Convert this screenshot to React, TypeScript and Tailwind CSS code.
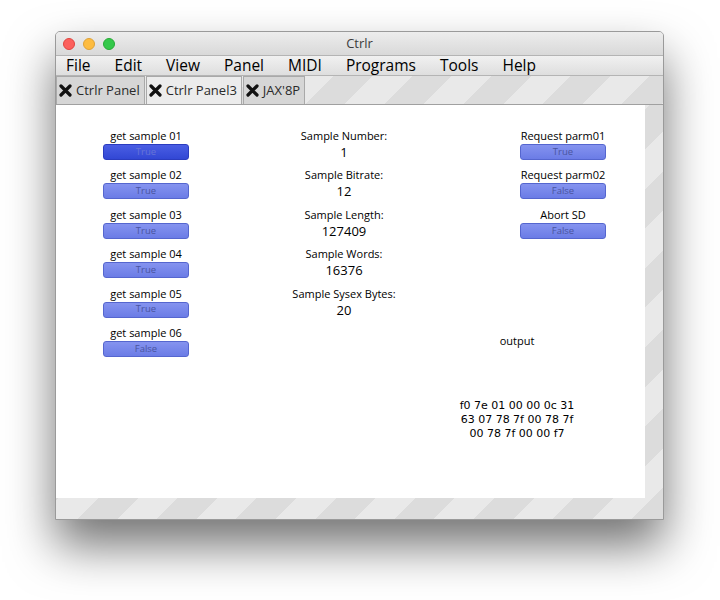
import React from "react";

const stripes =
  "bg-[repeating-linear-gradient(135deg,#e9e9e9_0px,#e9e9e9_28px,#dcdcdc_28px,#dcdcdc_56px)]";

function CloseGlyph() {
  return (
    <svg width="13" height="13" viewBox="0 0 13 13" className="shrink-0">
      <path d="M2 2 L11 11 M11 2 L2 11" stroke="#111" strokeWidth="3.2" strokeLinecap="round" />
    </svg>
  );
}

function Tab({ label, active }: { label: string; active?: boolean }) {
  return (
    <div
      className={
        "flex h-[28px] items-center gap-[4px] border border-b-0 border-[#a9a9a9] px-[2px] text-[13px] text-[#2a2a2a] " +
        (active ? "bg-[#ececec]" : "bg-[#d6d6d6]")
      }
    >
      <CloseGlyph />
      <span className="pr-[2px]">{label}</span>
    </div>
  );
}

function Toggle({ label, value, dark }: { label: string; value: string; dark?: boolean }) {
  return (
    <div className="flex h-[39.4px] flex-col items-center">
      <div className="h-[14px] text-[11px] leading-[14px] text-black whitespace-nowrap">{label}</div>
      <div
        className={
          "mt-[1px] flex h-[16px] w-[86px] items-center justify-center rounded-[3px] border text-[9.5px] " +
          (dark
            ? "border-[#2b3cbf] bg-gradient-to-b from-[#4a5ee4] to-[#3247d4] text-[#6674d6]"
            : "border-[#5566cf] bg-gradient-to-b from-[#8593ef] to-[#6b7ce6] text-[#4a55a0]")
        }
      >
        {value}
      </div>
    </div>
  );
}

function Readout({ label, value }: { label: string; value: string }) {
  return (
    <div className="flex h-[39.4px] flex-col items-center">
      <div className="h-[14px] text-[11px] leading-[14px] text-black whitespace-nowrap">{label}</div>
      <div className="mt-[1px] h-[16px] text-[13px] leading-[16px] text-black">{value}</div>
    </div>
  );
}

const samples = ["True", "True", "True", "True", "True", "False"];

export default function App() {
  return (
    <div
      className="h-[600px] w-[720px] bg-white pl-[55px] pt-[31px]"
      style={{ fontFamily: '"Open Sans", "DejaVu Sans", sans-serif' }}
    >
      <div className="flex h-[489px] w-[609px] flex-col overflow-hidden rounded-t-[5px] border border-[#9a9a9a] bg-[#e0e0e0] shadow-[0_26px_48px_rgba(0,0,0,0.55)]">
        {/* title bar */}
        <div className="grid h-[23px] grid-cols-[1fr_auto_1fr] items-center bg-gradient-to-b from-[#ededed] to-[#d9d9d9] px-[7px]">
          <div className="flex gap-[8px]">
            <span className="h-[12px] w-[12px] rounded-full border border-[#e0443e] bg-[#fc605c]" />
            <span className="h-[12px] w-[12px] rounded-full border border-[#dea236] bg-[#fdbc40]" />
            <span className="h-[12px] w-[12px] rounded-full border border-[#27aa35] bg-[#34c84a]" />
          </div>
          <div className="text-[13px] text-[#3c3c3c]">Ctrlr</div>
          <div />
        </div>

        {/* menu bar */}
        <div className="flex h-[21px] items-center gap-[24px] border-y border-[#b4b4b4] bg-gradient-to-b from-[#f1f1f1] to-[#dedede] pl-[10px] text-[15.5px] text-black">
          {["File", "Edit", "View", "Panel", "MIDI", "Programs", "Tools", "Help"].map((m) => (
            <span key={m}>{m}</span>
          ))}
        </div>

        {/* panel tabs */}
        <div className={"flex h-[29px] items-end gap-[1px] border-b border-[#a0a0a0] " + stripes}>
          <Tab label="Ctrlr Panel" />
          <Tab label="Ctrlr Panel3" active />
          <Tab label="JAX'8P" />
        </div>

        {/* panel canvas */}
        <div className={"flex-1 pb-[21px] pr-[18px] " + stripes}>
          <div className="flex h-full bg-white pl-[47px] pt-[24px]">
            <div className="w-[86px]">
              {samples.map((v, i) => (
                <Toggle key={i} label={`get sample 0${i + 1}`} value={v} dark={i === 0} />
              ))}
            </div>

            <div className="ml-[85px] w-[140px]">
              <Readout label="Sample Number:" value="1" />
              <Readout label="Sample Bitrate:" value="12" />
              <Readout label="Sample Length:" value="127409" />
              <Readout label="Sample Words:" value="16376" />
              <Readout label="Sample Sysex Bytes:" value="20" />
            </div>

            <div className="flex w-[206px] flex-col">
              <div className="ml-[106px] w-[86px]">
                <Toggle label="Request parm01" value="True" />
                <Toggle label="Request parm02" value="False" />
                <Toggle label="Abort SD" value="False" />
              </div>
              <div className="mt-[87px] text-center text-[11px] leading-[14px] text-black">output</div>
              <div
                className="mt-[51px] text-center text-[11px] leading-[14px] text-black"
                style={{ fontFamily: '"DejaVu Sans", sans-serif' }}
              >
                f0 7e 01 00 00 0c 31
                <br />
                63 07 78 7f 00 78 7f
                <br />
                00 78 7f 00 00 f7
              </div>
            </div>
          </div>
        </div>
      </div>
    </div>
  );
}
